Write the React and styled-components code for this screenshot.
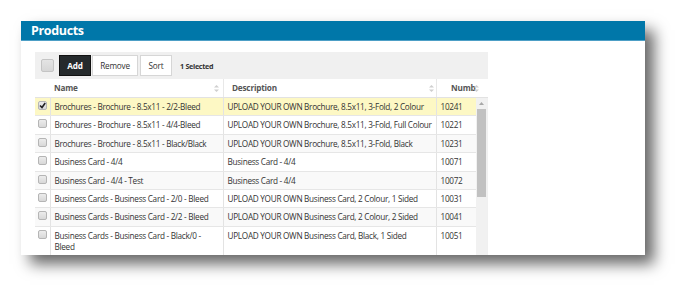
import React from "react";
import styled, { createGlobalStyle } from "styled-components";

const FONT = `"Open Sans", "Noto Sans", sans-serif`;

const Global = createGlobalStyle`
  html, body { margin: 0; padding: 0; background: #fff; }
  body { font-family: ${FONT}; }
`;

const Page = styled.div`
  padding: 21px 0 0 21px;
  height: 297px;
  box-sizing: border-box;
`;

const Panel = styled.div`
  width: 624px;
  height: 234px;
  background: #fff;
  overflow: hidden;
  box-shadow: 9px 9px 14px rgba(0, 0, 0, 0.6);
  display: flex;
  flex-direction: column;
`;

const Header = styled.div`
  height: 20px;
  background: #0077a9;
  border-bottom: 1px solid #4d9fc6;
  box-sizing: border-box;
  color: #fff;
  font-family: ${FONT};
  font-weight: 700;
  font-size: 12.5px;
  letter-spacing: -0.35px;
  line-height: 19px;
  padding-left: 10px;
`;

const Content = styled.div`
  padding: 11px 0 0 14px;
`;

const GrayBox = styled.div`
  width: 453px;
  background: #f0f0f0;
`;

const Toolbar = styled.div`
  height: 27px;
  display: flex;
  align-items: center;
  padding: 0 0 0 6px;
  box-sizing: border-box;
`;

const BigCheck = styled.span`
  width: 11px;
  height: 11px;
  border: 1px solid #c4c4c4;
  border-radius: 2px;
  background: linear-gradient(#e4e4e4, #d6d6d6);
  margin-right: 5px;
`;

const Btn = styled.button`
  height: 21px;
  padding: 0;
  width: ${p => p.$w}px;
  margin-right: ${p => p.$mr || 1}px;
  border: 1px solid ${p => (p.$dark ? "#111" : "#d6d6d6")};
  background: ${p => (p.$dark ? "#252a2c" : "#fff")};
  color: ${p => (p.$dark ? "#fff" : "#333")};
  font-family: ${FONT};
  font-size: 8.2px;
  letter-spacing: -0.2px;
  font-weight: ${p => (p.$dark ? 700 : 400)};
`;

const SelCount = styled.span`
  margin-left: 7px;
  font-family: ${FONT};
  font-size: 7.2px;
  letter-spacing: -0.3px;
  font-weight: 700;
  color: #333;
`;

const HeadRow = styled.div`
  display: grid;
  grid-template-columns: 15px 173px 213px 52px;
  height: 19px;
  background: #fff;
  border-bottom: 1px solid #e2e2e2;
  box-sizing: border-box;
`;

const HeadCell = styled.div`
  position: relative;
  font-family: ${FONT};
  font-size: 8.2px;
  letter-spacing: -0.2px;
  font-weight: 700;
  color: #555;
  line-height: 18px;
  padding-left: ${p => p.$pl || 0}px;
  border-left: ${p => (p.$sep ? "1px solid #e8e8e8" : "none")};
  white-space: nowrap;
`;

const SortIcon = styled.svg`
  position: absolute;
  right: ${p => p.$r || 3}px;
  top: 6px;
`;

const Body = styled.div`
  display: flex;
`;

const Table = styled.table`
  width: 441px;
  border-collapse: collapse;
  table-layout: fixed;
  background: #fff;
`;

const Row = styled.tr`
  background: ${p => (p.$sel ? "#fdf8c4" : p.$alt ? "#f9f9f9" : "#fff")};
`;

const Cell = styled.td`
  font-family: ${FONT};
  font-size: 8.2px;
  letter-spacing: -0.28px;
  color: #333;
  line-height: 11.4px;
  padding: ${p => (p.$cb ? "3px 0 0 3px" : "3px 4px 3px 4px")};
  vertical-align: top;
  white-space: ${p => (p.$nowrap ? "nowrap" : "normal")};
  overflow: hidden;
  border-bottom: 1px solid #e6e6e6;
  border-left: ${p => (p.$cb ? "none" : "1px solid #e3e3e3")};
`;

const SmallCheck = styled.span`
  display: block;
  width: 7px;
  height: 7px;
  border: 1px solid #b5b5b5;
  border-radius: 2px;
  background: linear-gradient(#ececec, #d8d8d8);
  position: relative;
`;

const Scrollbar = styled.div`
  width: 11px;
  background: #f1f1f1;
  display: flex;
  flex-direction: column;
  align-items: center;
`;

const Thumb = styled.div`
  width: 9px;
  height: 88px;
  background: #c1c1c1;
  margin-top: 4px;
`;

const Arrow = styled.svg`
  margin-top: 4px;
`;

const Sort = ({ r }) => (
  <SortIcon $r={r} width="5" height="7" viewBox="0 0 5 7">
    <path d="M2.5 0 L5 2.5 H0 Z" fill="#cfcfcf" />
    <path d="M2.5 7 L5 4.5 H0 Z" fill="#cfcfcf" />
  </SortIcon>
);

const rows = [
  ["Brochures - Brochure - 8.5x11 - 2/2-Bleed", "UPLOAD YOUR OWN Brochure, 8.5x11, 3-Fold, 2 Colour", "10241", true],
  ["Brochures - Brochure - 8.5x11 - 4/4-Bleed", "UPLOAD YOUR OWN Brochure, 8.5x11, 3-Fold, Full Colour", "10221"],
  ["Brochures - Brochure - 8.5x11 - Black/Black", "UPLOAD YOUR OWN Brochure, 8.5x11, 3-Fold, Black", "10231"],
  ["Business Card - 4/4", "Business Card - 4/4", "10071"],
  ["Business Card - 4/4 - Test", "Business Card - 4/4", "10072"],
  ["Business Cards - Business Card - 2/0 - Bleed", "UPLOAD YOUR OWN Business Card, 2 Colour, 1 Sided", "10031"],
  ["Business Cards - Business Card - 2/2 - Bleed", "UPLOAD YOUR OWN Business Card, 2 Colour, 2 Sided", "10041"],
  ["Business Cards - Business Card - Black/0 - Bleed", "UPLOAD YOUR OWN Business Card, Black, 1 Sided", "10051"],
];

export default function App() {
  return (
    <>
      <Global />
      <Page>
        <Panel>
          <Header>Products</Header>
          <Content>
            <GrayBox>
              <Toolbar>
                <BigCheck />
                <Btn $dark $w={32}>Add</Btn>
                <Btn $w={46} $mr={2}>Remove</Btn>
                <Btn $w={32}>Sort</Btn>
                <SelCount>1 Selected</SelCount>
              </Toolbar>
              <HeadRow>
                <HeadCell />
                <HeadCell $pl={4}>Name<Sort r={4} /></HeadCell>
                <HeadCell $pl={8} $sep>Description<Sort r={2} /></HeadCell>
                <HeadCell $pl={14} $sep>Numb<Sort r={9} /></HeadCell>
              </HeadRow>
              <Body>
                <Table>
                  <colgroup>
                    <col style={{ width: 15 }} />
                    <col style={{ width: 173 }} />
                    <col style={{ width: 213 }} />
                    <col style={{ width: 40 }} />
                  </colgroup>
                  <tbody>
                    {rows.map((r, i) => (
                      <Row key={i} $sel={r[3]} $alt={i % 2 === 0}>
                        <Cell $cb>
                          <SmallCheck>
                            {r[3] && (
                              <svg width="7" height="7" viewBox="0 0 7 7" style={{ position: "absolute", left: 0, top: 0 }}>
                                <path d="M1 3.5 L3 5.5 L6.2 1" stroke="#222" strokeWidth="1.6" fill="none" />
                              </svg>
                            )}
                          </SmallCheck>
                        </Cell>
                        <Cell>{r[0]}</Cell>
                        <Cell $nowrap>{r[1]}</Cell>
                        <Cell $nowrap>{r[2]}</Cell>
                      </Row>
                    ))}
                  </tbody>
                </Table>
                <Scrollbar>
                  <Arrow width="5" height="3" viewBox="0 0 5 3">
                    <path d="M2.5 0 L5 3 H0 Z" fill="#a8a8a8" />
                  </Arrow>
                  <Thumb />
                </Scrollbar>
              </Body>
            </GrayBox>
          </Content>
        </Panel>
      </Page>
    </>
  );
}
